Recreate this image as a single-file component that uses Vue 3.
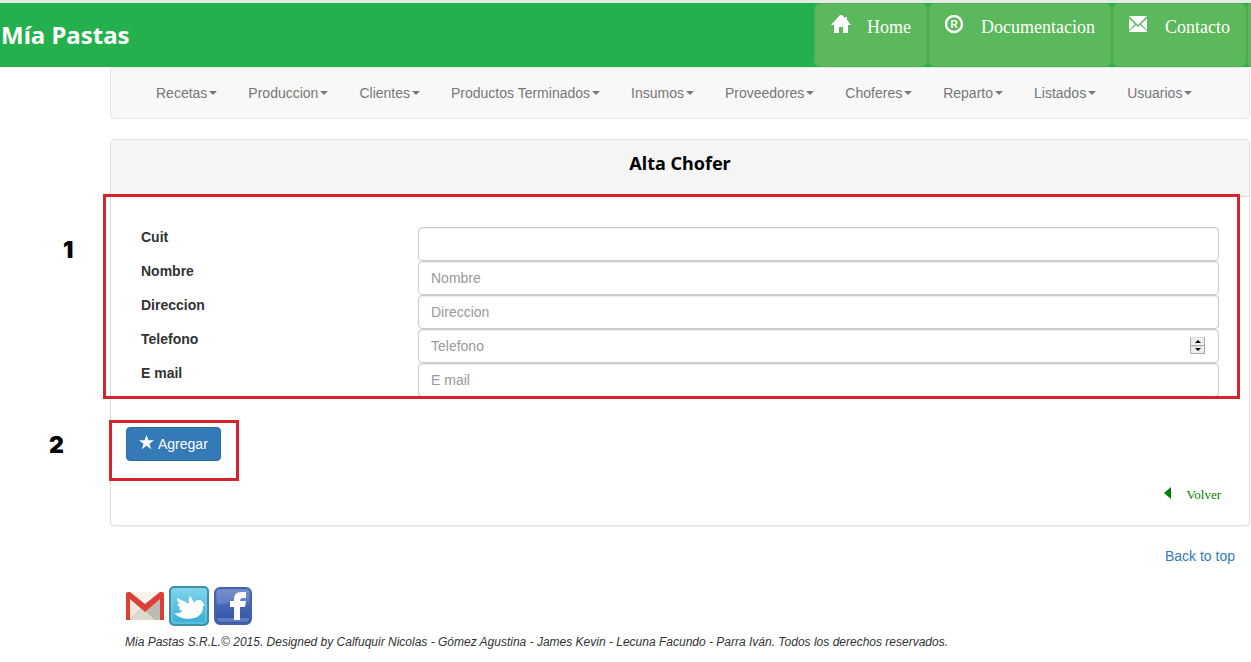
<script setup>
import { ref } from 'vue'

const menus = ['Recetas', 'Produccion', 'Clientes', 'Productos Terminados', 'Insumos', 'Proveedores', 'Choferes', 'Reparto', 'Listados', 'Usuarios']

const fields = ref([
  { id: 'cuit', label: 'Cuit', placeholder: '', type: 'text', value: '' },
  { id: 'nombre', label: 'Nombre', placeholder: 'Nombre', type: 'text', value: '' },
  { id: 'direccion', label: 'Direccion', placeholder: 'Direccion', type: 'text', value: '' },
  { id: 'telefono', label: 'Telefono', placeholder: 'Telefono', type: 'number', value: '' },
  { id: 'email', label: 'E mail', placeholder: 'E mail', type: 'email', value: '' },
])

function step(field, amount) {
  field.value = Number(field.value || 0) + amount
}
</script>

<template>
  <header class="topbar">
    <h1 class="brand">Mía Pastas</h1>
    <nav class="quick">
      <a class="quick-link" href="#home">
        <svg class="quick-icon" viewBox="0 0 20 20" aria-hidden="true">
          <path d="M9 0h2l3 3V2h2v3l4 5h-3v8h-5v-6H8v6H3v-8H0z" fill="#fff" />
        </svg>
        <span>Home</span>
      </a>
      <a class="quick-link" href="#documentacion">
        <svg class="quick-icon" viewBox="0 0 20 20" aria-hidden="true">
          <circle cx="9" cy="9" r="8" fill="none" stroke="#fff" stroke-width="2.4" />
          <text x="9" y="12.500" text-anchor="middle" class="registered">R</text>
        </svg>
        <span>Documentacion</span>
      </a>
      <a class="quick-link" href="#contacto">
        <svg class="quick-icon" viewBox="0 0 20 20" aria-hidden="true">
          <path d="M0 1h18L9 10zM0 3.500l6 5.500-6 6zM18 3.500 12 9l6 6zM0 17v-1l7-6 2 2 2-2 7 6v1z" fill="#fff" />
        </svg>
        <span>Contacto</span>
      </a>
      <span class="quick-edge"></span>
    </nav>
  </header>

  <div class="container">
    <nav class="navbar">
      <button v-for="menu in menus" :key="menu" type="button" class="menu">{{ menu }}<span class="caret"></span></button>
    </nav>

    <main class="panel">
      <div class="panel-heading"><h2 class="title">Alta Chofer</h2></div>
      <form class="panel-body" @submit.prevent>
        <div class="fields">
          <div v-for="field in fields" :key="field.id" class="row">
            <label class="label" :for="field.id">{{ field.label }}</label>
            <div class="control">
              <input :id="field.id" v-model="field.value" class="input" :type="field.type" :placeholder="field.placeholder">
              <div v-if="field.type === 'number'" class="spinner">
                <button type="button" class="step" aria-label="Aumentar" @click="step(field, 1)"><span class="up"></span></button>
                <button type="button" class="step" aria-label="Disminuir" @click="step(field, -1)"><span class="down"></span></button>
              </div>
            </div>
          </div>
          <div class="mark mark-fields"><span class="number">1</span></div>
        </div>
        <div class="actions">
          <button type="submit" class="submit">
            <svg class="star" viewBox="0 0 14 14" aria-hidden="true">
              <path d="M7 0l1.800 5H14L9.800 8.200l1.600 5L7 10.100l-4.400 3.100 1.600-5L0 5h5.200z" fill="#fff" />
            </svg>
            Agregar
          </button>
          <div class="mark mark-submit"><span class="number">2</span></div>
        </div>
        <a class="back" href="#volver">
          <svg class="back-icon" viewBox="0 0 7 12" aria-hidden="true"><path d="M7 0v12L0 6z" fill="#008000" /></svg>
          Volver
        </a>
      </form>
    </main>

    <footer class="footer">
      <a class="top-link" href="#top">Back to top</a>
      <div class="social">
        <a href="#gmail" aria-label="Gmail">
          <svg width="40" height="40" viewBox="0 0 40 40">
            <rect x="1" y="6" width="38" height="28" rx="2" fill="#ece9dc" />
            <path d="M5 34 20 20l15 14z" fill="#dedbce" />
            <path d="M20 25 35 12v22h-5z" fill="#bdbbb1" />
            <path d="M5 34 17 22M35 34 23 22" fill="none" stroke="#c8c5b9" />
            <path d="M5 6h30L20 19z" fill="#f6f4ed" />
            <path d="M1 34V8q0-2 2-2h2l15 12L35 6h2q2 0 2 2v26h-4V13L20 26 5 13v21z" fill="#dc3f35" />
          </svg>
        </a>
        <a href="#twitter" aria-label="Twitter">
          <svg width="40" height="40" viewBox="0 0 40 40">
            <defs>
              <linearGradient id="sky" x1="0" y1="0" x2="0" y2="1">
                <stop offset="0" stop-color="#83d7ed" />
                <stop offset="1" stop-color="#35acd4" />
              </linearGradient>
            </defs>
            <rect x="1" y="1" width="38" height="38" rx="4" fill="url(#sky)" stroke="#3f8fab" stroke-width="2" />
            <rect x="3" y="3" width="34" height="34" rx="3" fill="none" stroke="#79d0e8" />
            <path d="M5 27q5 1 9-2-3 0-4-3h2q-3-1-4-4h3q-3-2-3-6 7 3 12 6-1-5 1-8 2 2 4 7 1-3 5-3 3 0 4 3l2 2-2 1q0 10-9 12-12 3-20-5z" fill="#fff" />
          </svg>
        </a>
        <a href="#facebook" aria-label="Facebook">
          <svg width="40" height="40" viewBox="0 0 40 40">
            <defs>
              <linearGradient id="blue" x1="0" y1="0" x2="0" y2="1">
                <stop offset="0" stop-color="#6f8bcc" />
                <stop offset="0.5" stop-color="#4664b5" />
                <stop offset="1" stop-color="#3452a6" />
              </linearGradient>
            </defs>
            <rect x="2" y="2" width="36" height="36" rx="5" fill="url(#blue)" stroke="#4763a8" stroke-width="2" />
            <path d="M4 19V7q0-3 3-3h26q3 0 3 3v9q-16-1-32 3z" fill="#7d96d0" opacity=".45" />
            <path d="M4 32h32v1q0 3-3 3H7q-3 0-3-3z" fill="#7592d2" opacity=".6" />
            <path d="M21 34V21h-4v-6h4v-2q0-7 7-7h5v6h-3q-3 0-3 3h6l-1 6h-5v13z" fill="#fff" />
          </svg>
        </a>
      </div>
      <p class="legal">Mia Pastas S.R.L.© 2015. Designed by Calfuquir Nicolas - Gómez Agustina - James Kevin - Lecuna Facundo - Parra Iván. Todos los derechos reservados.</p>
    </footer>
  </div>
</template>

<style>
body {
  margin: 0;
  background: #fff;
  color: #333;
  font-family: "Liberation Sans", Arial, sans-serif;
  font-size: 14px;
  line-height: 20px;
}
</style>

<style scoped>
* {
  box-sizing: border-box;
}
a {
  text-decoration: none;
}
button {
  font: inherit;
  cursor: pointer;
}
.topbar {
  display: flex;
  justify-content: space-between;
  height: 67px;
  border-top: 3px solid #e4ebe5;
  background: #24b14d;
}
.brand {
  margin: 0;
  padding-left: 1px;
  color: #fff;
  font: bold 24px/64px "Noto Sans", Tahoma, sans-serif;
}
.quick {
  display: flex;
}
.quick-link {
  display: flex;
  gap: 16px;
  padding: 11px 16px;
  border: 1px solid #4cae4c;
  border-radius: 6px;
  background: #5cb85c;
  color: #fff;
  font: 18px/24px "Liberation Serif", "Times New Roman", serif;
}
.quick-icon {
  width: 20px;
  height: 20px;
}
.registered {
  fill: #fff;
  font: bold 10px "Liberation Sans", Arial, sans-serif;
}
.quick-edge {
  width: 4px;
  border-left: 1px solid #4cae4c;
  border-radius: 6px 0 0 6px;
  background: #5cb85c;
}
.container {
  margin: 0 1px 0 110px;
}
.navbar {
  display: flex;
  gap: 1px;
  padding: 0 30px;
  border: 1px solid #e7e7e7;
  border-radius: 4px;
  background: #f8f8f8;
}
.menu {
  display: flex;
  align-items: center;
  gap: 2px;
  padding: 15px;
  border: 0;
  background: none;
  color: #777;
  white-space: nowrap;
}
.caret {
  border: 4px solid transparent;
  border-top-color: #777;
  border-bottom: 0;
}
.panel {
  margin-top: 20px;
  border: 1px solid #ddd;
  border-radius: 4px;
  box-shadow: 0 1px 1px rgba(0, 0, 0, 0.05);
}
.panel-heading {
  padding: 10px 15px 20px;
  border-bottom: 1px solid #ddd;
  background: #f5f5f5;
}
.title {
  margin: 0;
  color: #000;
  font: bold 18px/26px "Noto Sans", Tahoma, sans-serif;
  text-align: center;
}
.panel-body {
  display: flex;
  flex-direction: column;
  padding: 30px 15px 20px;
}
.fields,
.actions,
.control {
  position: relative;
}
.row {
  display: grid;
  grid-template-columns: 1fr 3fr;
}
.label {
  padding-left: 15px;
  font-weight: bold;
}
.control {
  padding: 0 15px;
}
.input {
  display: block;
  width: 100%;
  height: 34px;
  padding: 6px 12px;
  border: 1px solid #ccc;
  border-radius: 4px;
  background: #fff;
  box-shadow: inset 0 1px 1px rgba(0, 0, 0, 0.075);
  color: #555;
  font: inherit;
  appearance: textfield;
}
.input::placeholder {
  color: #999;
  opacity: 1;
}
.input::-webkit-inner-spin-button {
  appearance: none;
}
.spinner {
  position: absolute;
  top: 8px;
  right: 29px;
  display: grid;
  width: 15px;
  height: 17px;
}
.step {
  display: grid;
  place-items: center;
  padding: 0;
  border: 1px solid #aaa;
  border-top-color: #ddd;
  background: #eee;
}
.up,
.down {
  border: 3px solid transparent;
}
.up {
  border-top: 0;
  border-bottom-color: #000;
}
.down {
  border-top-color: #000;
  border-bottom: 0;
}
.mark {
  position: absolute;
  border: 3px solid #d6242c;
  pointer-events: none;
}
.mark-fields {
  inset: -33px -6px -2px -23px;
}
.mark-submit {
  top: -7px;
  left: -17px;
  width: 130px;
  height: 61px;
}
.number {
  position: absolute;
  color: #000;
  font: 900 23px/24px Inter, "Arial Black", sans-serif;
}
.mark-fields .number {
  top: 41px;
  left: -43px;
}
.mark-submit .number {
  top: 10px;
  left: -63px;
}
.actions {
  align-self: flex-start;
  margin-top: 30px;
}
.submit {
  display: flex;
  gap: 4px;
  padding: 6px 12px;
  border: 1px solid #2e6da4;
  border-radius: 4px;
  background: #337ab7;
  color: #fff;
}
.star {
  width: 15px;
  height: 15px;
  margin-top: 1px;
}
.back {
  display: flex;
  align-self: flex-end;
  gap: 16px;
  margin-top: 24px;
  padding-right: 13px;
  color: #008000;
  font: 13px/20px "Liberation Serif", "Times New Roman", serif;
}
.back-icon {
  width: 7px;
  height: 12px;
  margin-top: 2px;
}
.footer {
  display: flex;
  flex-direction: column;
  padding: 20px 15px 0;
}
.top-link {
  align-self: flex-end;
  color: #337ab7;
}
.social {
  display: flex;
  gap: 4px;
  margin-top: 20px;
}
.social svg {
  display: block;
}
.legal {
  margin: 6px 0 0;
  font-size: 12px;
  font-style: italic;
}
</style>
